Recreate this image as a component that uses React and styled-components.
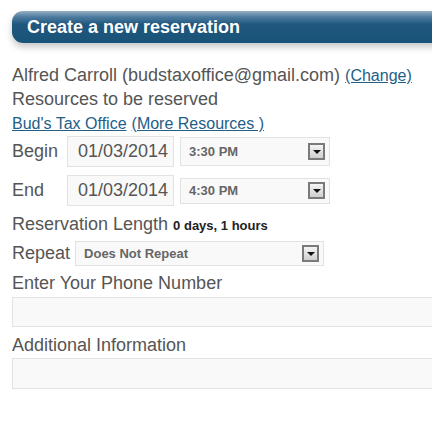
import React from 'react'
import styled, { createGlobalStyle } from 'styled-components'

const GlobalStyle = createGlobalStyle`
  body {
    margin: 0;
    background: #fff;
    font-family: "Liberation Sans", Arial, sans-serif;
    color: #555;
  }
`

const Page = styled.div`
  padding: 11px 0 0 12px;
  overflow: hidden;
`

const Header = styled.h2`
  margin: 0 -20px 0 0;
  height: 32px;
  padding-left: 15px;
  display: flex;
  align-items: center;
  border-radius: 11px 0 0 11px;
  background: linear-gradient(to bottom, #94afc5 0%, #4f7ca0 18%, #1f577e 42%, #1a5378 100%);
  box-shadow: 0 4px 7px rgba(0, 0, 0, 0.22);
  color: #fff;
  font-size: 18px;
  font-weight: bold;
`

const Line = styled.div`
  font-size: 18px;
  line-height: 24px;
  margin-top: ${p => p.$top || 0}px;
`

const Link = styled.a`
  font-size: 16px;
  line-height: 1;
  color: #235e87;
  text-decoration: underline;
  cursor: pointer;
`

const Row = styled.div`
  display: flex;
  align-items: center;
  gap: ${p => p.$gap || 6}px;
  margin-top: ${p => p.$top || 0}px;
`

const Label = styled.span`
  font-size: 18px;
  width: ${p => (p.$w ? `${p.$w}px` : 'auto')};
`

const DateBox = styled.div`
  box-sizing: border-box;
  width: 107px;
  height: 31px;
  padding-left: 10px;
  display: flex;
  align-items: center;
  background: #f9f9f9;
  border: 1px solid #e2e2e2;
  font-size: 18px;
  color: #555;
`

const Select = styled.div`
  box-sizing: border-box;
  width: ${p => p.$w}px;
  height: ${p => p.$h || 26}px;
  padding: 0 4px 0 8px;
  display: flex;
  align-items: center;
  justify-content: space-between;
  background: #f9f9f9;
  border: 1px solid #e2e2e2;
  font-size: 13px;
  font-weight: bold;
  color: #666;
`

const Arrow = styled.span`
  box-sizing: border-box;
  width: 17px;
  height: 17px;
  display: flex;
  align-items: center;
  justify-content: center;
  border: 2px solid #7a7a7a;
  background: linear-gradient(to bottom, #f4f4f4, #cfcfcf);

  &::after {
    content: '';
    border-left: 4px solid transparent;
    border-right: 4px solid transparent;
    border-top: 4px solid #111;
  }
`

const Strong = styled.b`
  font-size: 13px;
  line-height: 1;
  color: #222;
`

const Field = styled.div`
  box-sizing: border-box;
  height: ${p => p.$h}px;
  margin: ${p => p.$top || 0}px -10px 0 0;
  background: #f9f9f9;
  border: 1px solid #e2e2e2;
`

function TimeSelect({ value, width, height }) {
  return (
    <Select $w={width} $h={height}>
      <span>{value}</span>
      <Arrow />
    </Select>
  )
}

export default function App() {
  return (
    <>
      <GlobalStyle />
      <Page>
        <Header>Create a new reservation</Header>
        <Line $top={20}>
          Alfred Carroll (budstaxoffice@gmail.com) <Link>(Change)</Link>
        </Line>
        <Line>Resources to be reserved</Line>
        <Line>
          <Link>Bud's Tax Office</Link> <Link>(More Resources )</Link>
        </Line>
        <Row $top={1}>
          <Label $w={49}>Begin</Label>
          <DateBox>01/03/2014</DateBox>
          <TimeSelect value="3:30 PM" width={150} height={29} />
        </Row>
        <Row $top={8}>
          <Label $w={49}>End</Label>
          <DateBox>01/03/2014</DateBox>
          <TimeSelect value="4:30 PM" width={150} height={26} />
        </Row>
        <Line $top={6}>
          Reservation Length <Strong>0 days, 1 hours</Strong>
        </Line>
        <Row $top={5} $gap={5}>
          <Label>Repeat</Label>
          <TimeSelect value="Does Not Repeat" width={249} height={25} />
        </Row>
        <Line $top={5}>Enter Your Phone Number</Line>
        <Field $h={30} $top={2} />
        <Line $top={6}>Additional Information</Line>
        <Field $h={31} $top={1} />
      </Page>
    </>
  )
}
